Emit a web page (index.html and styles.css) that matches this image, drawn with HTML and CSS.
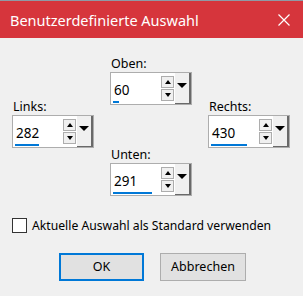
FILE: index.html
```html
<!DOCTYPE html>
<html lang="de">
<head>
    <meta charset="UTF-8">
    <title>Benutzerdefinierte Auswahl</title>
    <link rel="stylesheet" href="styles.css">
</head>
<body>

<div class="titlebar">
    <div class="title">Benutzerdefinierte Auswahl</div>
    <div class="close">
        <svg width="12" height="12" viewBox="0 0 12 12"><path d="M0.5 0.5 L11.5 11.5 M11.5 0.5 L0.5 11.5" stroke="#fff" stroke-width="1.2" fill="none"/></svg>
    </div>
</div>

<div class="content">
    <div class="fields">
        <div class="col side">
            <div class="field">
                <label>Links:</label>
                <div class="spin">
                    <div class="value">282<span class="bar" style="width: 24px"></span></div>
                    <div class="arrows">
                        <div class="arrow"><span class="tri up"></span></div>
                        <div class="arrow"><span class="tri down"></span></div>
                    </div>
                    <div class="drop"><span class="tri big"></span></div>
                </div>
            </div>
        </div>
        <div class="col middle">
            <div class="field">
                <label>Oben:</label>
                <div class="spin">
                    <div class="value">60<span class="bar" style="width: 6px"></span></div>
                    <div class="arrows">
                        <div class="arrow"><span class="tri up"></span></div>
                        <div class="arrow"><span class="tri down"></span></div>
                    </div>
                    <div class="drop"><span class="tri big"></span></div>
                </div>
            </div>
            <div class="field lower">
                <label>Unten:</label>
                <div class="spin">
                    <div class="value">291<span class="bar" style="width: 39px"></span></div>
                    <div class="arrows">
                        <div class="arrow"><span class="tri up"></span></div>
                        <div class="arrow"><span class="tri down"></span></div>
                    </div>
                    <div class="drop"><span class="tri big"></span></div>
                </div>
            </div>
        </div>
        <div class="col side">
            <div class="field">
                <label>Rechts:</label>
                <div class="spin">
                    <div class="value">430<span class="bar" style="width: 36px"></span></div>
                    <div class="arrows">
                        <div class="arrow"><span class="tri up"></span></div>
                        <div class="arrow"><span class="tri down"></span></div>
                    </div>
                    <div class="drop"><span class="tri big"></span></div>
                </div>
            </div>
        </div>
    </div>

    <label class="check"><span class="box"></span>Aktuelle Auswahl als Standard verwenden</label>

    <div class="buttons">
        <div class="btn default">OK</div>
        <div class="btn">Abbrechen</div>
    </div>
</div>

</body>
</html>
```

FILE: styles.css
```css
body {
    font-family: "Noto Sans", "Open Sans", sans-serif;
    font-size: 12px;
    color: #000;
    background-color: #f0f0f0;
    margin: 0;
    padding: 0;
    width: 303px;
    height: 296px;
    overflow: hidden;
}
.titlebar {
    background-color: #d6353c;
    border-top: 1px solid #8f9aa6;
    height: 37px;
    display: flex;
    align-items: center;
    justify-content: space-between;
    padding: 0 13px 0 10px;
    color: #fff;
}
.title {
    font-size: 14.5px;
}
.close {
    display: flex;
    margin-top: 1px;
}
.content {
    padding: 0 12px;
}
.fields {
    display: flex;
    gap: 16px;
}
.col {
    width: 82px;
    display: flex;
    flex-direction: column;
}
.side {
    padding-top: 60px;
}
.middle {
    padding-top: 17px;
}
.field label {
    display: block;
    height: 17px;
    line-height: 17px;
    font-size: 12.5px;
    padding-left: 1px;
}
.field.lower {
    margin-top: 41px;
}
.spin {
    display: flex;
    height: 31px;
    border: 1px solid #adadad;
    background-color: #fff;
}
.value {
    flex: 1;
    position: relative;
    padding: 8px 0 0 3px;
    line-height: 18px;
    font-size: 13.5px;
    color: #000;
}
.bar {
    position: absolute;
    left: 2px;
    bottom: 1px;
    height: 2px;
    background-color: #0078d7;
}
.arrows {
    display: flex;
    flex-direction: column;
    gap: 1px;
    padding: 3px 1px 0 0;
}
.arrow {
    width: 11px;
    height: 10px;
    border: 1px solid #adadad;
    background-color: #f0f0f0;
    display: flex;
    align-items: center;
    justify-content: center;
}
.tri {
    width: 0;
    height: 0;
    border-left: 3px solid transparent;
    border-right: 3px solid transparent;
}
.tri.up {
    border-bottom: 4px solid #000;
}
.tri.down {
    border-top: 4px solid #000;
}
.drop {
    width: 14px;
    background-color: #f0f0f0;
    border-right: 2px solid #696969;
    border-bottom: 1px solid #696969;
    display: flex;
    justify-content: center;
    padding-top: 10px;
}
.tri.big {
    border-left-width: 5px;
    border-right-width: 5px;
    border-top: 5px solid #000;
}
.check {
    display: flex;
    align-items: center;
    margin-top: 22px;
    height: 15px;
    white-space: nowrap;
    font-size: 12.2px;
}
.check .box {
    width: 13px;
    height: 13px;
    border: 1px solid #333;
    background-color: #fff;
    margin-right: 5px;
}
.buttons {
    display: flex;
    gap: 16px;
    margin: 20px 0 0 47px;
}
.btn {
    width: 84px;
    height: 26px;
    line-height: 26px;
    text-align: center;
    background-color: #e1e1e1;
    border: 1px solid #adadad;
    font-size: 12.5px;
}
.btn.default {
    width: 81px;
    height: 24px;
    line-height: 24px;
    border: 2px solid #0078d7;
}
```
